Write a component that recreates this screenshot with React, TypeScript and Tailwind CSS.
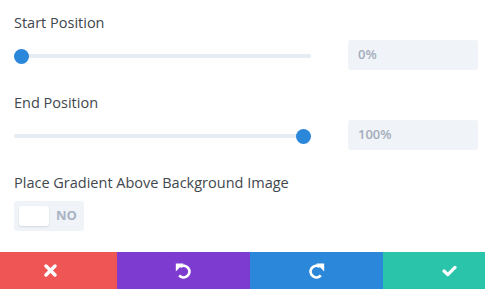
import { useState } from "react";

function Slider({ value }: { value: number }) {
  return (
    <div className="relative h-[30px] w-[297px]">
      <div className="absolute left-0 right-0 top-[14px] h-[4px] rounded-full bg-[#e6ecf4]" />
      <div
        className="absolute top-[9px] h-[15px] w-[15px] rounded-full bg-[#2b87da]"
        style={{ left: `calc(${value}% - ${(value / 100) * 15}px)` }}
      />
    </div>
  );
}

function PositionField({ label, value }: { label: string; value: number }) {
  return (
    <div>
      <div className="h-5 text-[14.5px] leading-5 text-[#41474d]">{label}</div>
      <div className="mt-[7.5px] flex items-center">
        <Slider value={value} />
        <div className="ml-[37px] flex h-[30px] w-[130px] items-center rounded-[3px] bg-[#f0f3f8] pl-[10px] text-[13px] font-semibold text-[#a3adbb]">
          {value}%
        </div>
      </div>
    </div>
  );
}

function XIcon() {
  return (
    <svg width="13" height="13" viewBox="0 0 13 13">
      <path d="M2 2 L11 11 M11 2 L2 11" stroke="white" strokeWidth="3.4" strokeLinecap="round" />
    </svg>
  );
}

function UndoIcon({ flip }: { flip?: boolean }) {
  return (
    <svg width="17" height="16" viewBox="0 0 17 16" style={flip ? { transform: "scaleX(-1)" } : undefined}>
      <path d="M5.2 3.8 A5.8 5.8 0 1 1 4.2 12.3" fill="none" stroke="white" strokeWidth="2.8" />
      <path d="M0.8 0.6 L8.6 0.6 L0.8 8.4 Z" fill="white" />
    </svg>
  );
}

function CheckIcon() {
  return (
    <svg width="15" height="12" viewBox="0 0 15 12">
      <path d="M2 6 L5.8 9.6 L13 2.4" fill="none" stroke="white" strokeWidth="3.2" strokeLinejoin="round" strokeLinecap="round" />
    </svg>
  );
}

export default function App() {
  const [on, setOn] = useState(false);

  return (
    <div className="flex h-[289px] w-[485px] flex-col overflow-hidden bg-white font-['Open_Sans',sans-serif]">
      <div className="flex-1 pl-[14px] pt-[12.5px]">
        <PositionField label="Start Position" value={0} />
        <div className="mt-[22.5px]">
          <PositionField label="End Position" value={100} />
        </div>
        <div className="mt-[22.5px]">
          <div className="h-5 text-[14.5px] leading-5 text-[#41474d]">
            Place Gradient Above Background Image
          </div>
          <button
            type="button"
            onClick={() => setOn(!on)}
            className="mt-[8.5px] flex h-[30px] w-[70px] items-center rounded-[3px] bg-[#f0f3f8] pl-[5px]"
          >
            <span className="h-[20px] w-[30px] rounded-[3px] bg-white shadow-[0_1px_2px_rgba(0,0,0,0.12)]" />
            <span className="ml-[7px] text-[13px] font-bold text-[#a9b4c3]">NO</span>
          </button>
        </div>
      </div>
      <div className="h-[37px] overflow-hidden">
        <div className="ml-[-16px] flex h-full w-[532px]">
          <button type="button" className="flex w-[133px] items-center justify-center bg-[#ef5555]">
            <XIcon />
          </button>
          <button type="button" className="flex w-[133px] items-center justify-center bg-[#7e3bd0]">
            <UndoIcon />
          </button>
          <button type="button" className="flex w-[133px] items-center justify-center bg-[#2b87da]">
            <UndoIcon flip />
          </button>
          <button type="button" className="flex w-[133px] items-center justify-center bg-[#29c4a9]">
            <CheckIcon />
          </button>
        </div>
      </div>
    </div>
  );
}
